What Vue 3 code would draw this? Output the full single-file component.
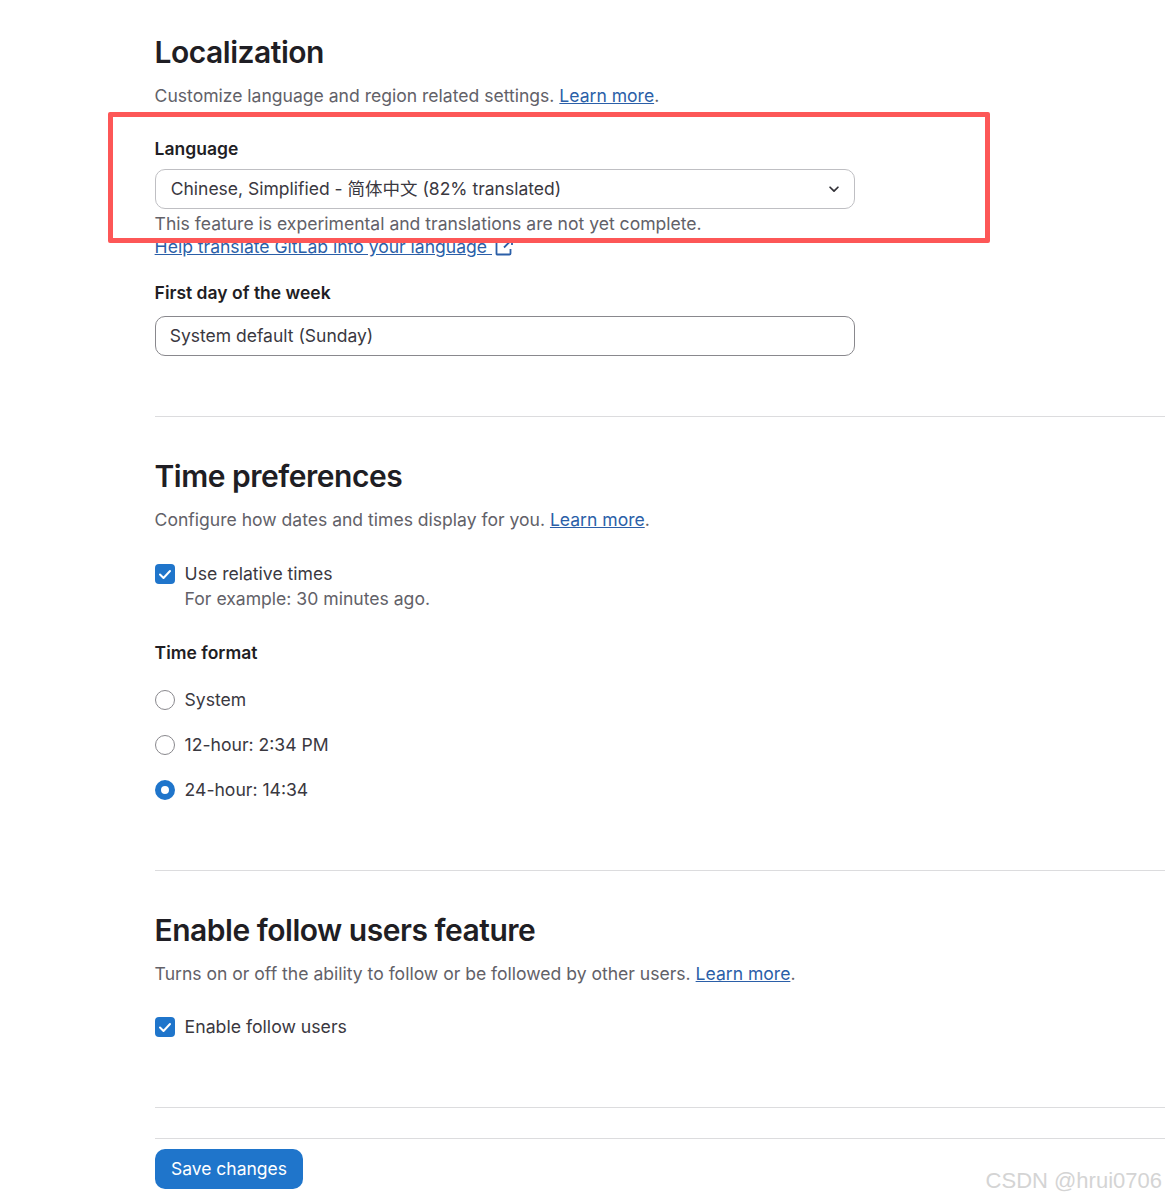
<script setup>
const timeFormats = [
  { label: 'System', checked: false },
  { label: '12-hour: 2:34 PM', checked: false },
  { label: '24-hour: 14:34', checked: true }
]
</script>

<template>
  <div class="page">
    <section class="section first">
      <h2 class="title">Localization</h2>
      <p class="desc">Customize language and region related settings. <a class="link">Learn more</a>.</p>

      <div class="label label-language">Language</div>
      <div class="select">
        <span>Chinese, Simplified - 简体中文 (82% translated)</span>
        <svg class="chevron" viewBox="0 0 16 16" width="14" height="14">
          <path d="M3.5 6l4.500 4.500L12.500 6" fill="none" stroke="#333238" stroke-width="2" stroke-linecap="round" stroke-linejoin="round" />
        </svg>
      </div>
      <p class="help">This feature is experimental and translations are not yet complete.</p>
      <a class="link help-link">Help translate GitLab into your language
        <svg class="external" viewBox="0 0 18 18" width="18" height="18">
          <path d="M7.500 2.500H2.500a1 1 0 0 0-1 1V16a.5 .5 0 0 0 .5 .5h12.500a1 1 0 0 0 1-1V11" fill="none" stroke="#2b5fa8" stroke-width="1.800" />
          <path d="M9 9.500L16 2.500M11.500 1.500h5.500v5.500" fill="none" stroke="#2b5fa8" stroke-width="1.800" />
        </svg>
      </a>

      <div class="label label-week">First day of the week</div>
      <div class="input">System default (Sunday)</div>
    </section>

    <section class="section">
      <h2 class="title">Time preferences</h2>
      <p class="desc">Configure how dates and times display for you. <a class="link">Learn more</a>.</p>

      <div class="check-row relative">
        <span class="checkbox">
          <svg viewBox="0 0 20 20" width="20" height="20">
            <path d="M5 10.500l3.500 3.500 6.500-7" fill="none" stroke="#fff" stroke-width="2" stroke-linecap="round" stroke-linejoin="round" />
          </svg>
        </span>
        <div>
          <div class="check-label">Use relative times</div>
          <div class="check-help">For example: 30 minutes ago.</div>
        </div>
      </div>

      <div class="label label-format">Time format</div>
      <div class="radios">
        <div v-for="item in timeFormats" :key="item.label" class="radio-row">
          <span class="radio" :class="{ checked: item.checked }"></span>
          <span class="check-label">{{ item.label }}</span>
        </div>
      </div>
    </section>

    <section class="section follow">
      <h2 class="title">Enable follow users feature</h2>
      <p class="desc">Turns on or off the ability to follow or be followed by other users. <a class="link">Learn more</a>.</p>
      <div class="check-row follow-row">
        <span class="checkbox">
          <svg viewBox="0 0 20 20" width="20" height="20">
            <path d="M5 10.500l3.500 3.500 6.500-7" fill="none" stroke="#fff" stroke-width="2" stroke-linecap="round" stroke-linejoin="round" />
          </svg>
        </span>
        <div class="check-label">Enable follow users</div>
      </div>
    </section>

    <footer class="actions">
      <button class="save">Save changes</button>
    </footer>

    <div class="highlight"></div>
    <div class="watermark">CSDN @hrui0706</div>
  </div>
</template>

<style>
html,
body {
  margin: 0;
  background: #fff;
}
</style>

<style scoped>
.page {
  position: relative;
  width: 1165px;
  height: 1201px;
  overflow: hidden;
  box-sizing: border-box;
  padding: 32px 0 0 155px;
  font-family: Inter, "Noto Sans CJK SC", sans-serif;
  font-size: 17.5px;
  line-height: 25px;
  color: #3a383f;
  background: #fff;
}

.section {
  border-bottom: 1px solid #dcdcde;
  height: 454px;
  box-sizing: border-box;
}

.first {
  height: 385px;
}

.follow {
  height: 237px;
}

.section + .section {
  padding-top: 39px;
}

.title {
  margin: 0 0 0 -0.5px;
  font-size: 30px;
  line-height: 40px;
  font-weight: 600;
  letter-spacing: -0.48px;
  color: #1f1e24;
}

.desc {
  margin: 11px 0 0 -0.4px;
  font-size: 17.56px;
  color: #626168;
}

.link {
  color: #2b5fa8;
  text-decoration: underline;
}

.label {
  margin-left: -0.4px;
  font-weight: 600;
  color: #1f1e24;
}

.label-language {
  margin-top: 28px;
}

.select,
.input {
  box-sizing: border-box;
  width: 700px;
  height: 40px;
  border-radius: 10px;
  display: flex;
  align-items: center;
}

.select {
  margin-top: 8px;
  justify-content: space-between;
  padding: 0 13px 1px 14.7px;
  border: 1px solid #bfbfc3;
}

.input {
  margin-top: 11px;
  padding: 0 13.7px 1px;
  border: 1px solid #89888d;
}

.help {
  margin: 2px 0 0 -0.4px;
  font-size: 17.56px;
  color: #626168;
}

.help-link {
  display: block;
  margin-left: -0.4px;
  font-size: 17.56px;
  line-height: 22px;
}

.external {
  vertical-align: -3px;
  margin-left: 3px;
}

.label-week {
  margin-top: 22px;
}

.check-row {
  display: flex;
  gap: 9.6px;
}

.relative {
  margin-top: 29px;
}

.checkbox {
  flex: none;
  width: 20px;
  height: 20px;
  margin-top: 3px;
  border-radius: 4px;
  background: #1f75cb;
  display: block;
}

.checkbox svg {
  display: block;
}

.check-label,
.check-help {
  font-size: 17.58px;
}

.check-help {
  color: #626168;
}

.label-format {
  margin-top: 29px;
}

.radios {
  margin-top: 22px;
  display: flex;
  flex-direction: column;
  gap: 20px;
}

.radio-row {
  display: flex;
  align-items: center;
  gap: 9.6px;
}

.radio {
  box-sizing: border-box;
  width: 20px;
  height: 20px;
  border-radius: 50%;
  border: 1px solid #89888d;
  background: #fff;
}

.radio.checked {
  border: 6px solid #1f75cb;
}

.follow-row {
  margin-top: 28px;
}

.follow-row .check-label {
  font-size: 17.68px;
}

.actions {
  margin-top: 30px;
  padding-top: 10px;
  border-top: 1px solid #dcdcde;
}

.save {
  display: block;
  width: 148px;
  height: 40px;
  padding: 0 0 1px;
  border: 0;
  border-radius: 10px;
  background: #1f75cb;
  color: #fff;
  font: inherit;
}

.highlight {
  position: absolute;
  left: 108px;
  top: 112px;
  width: 882px;
  height: 131px;
  box-sizing: border-box;
  border: 5px solid #fd5757;
  border-radius: 2px;
}

.watermark {
  position: absolute;
  right: 3px;
  bottom: 6px;
  font-family: "Liberation Sans", sans-serif;
  font-size: 22px;
  line-height: 28px;
  color: #d4d4d4;
}
</style>
